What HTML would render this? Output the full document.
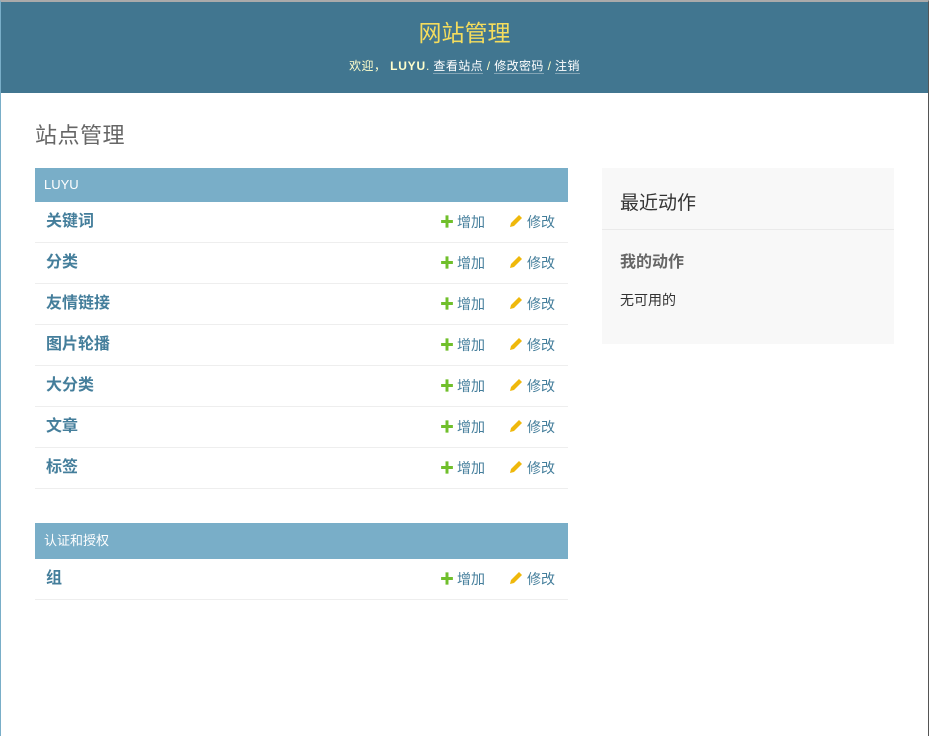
<!DOCTYPE html>
<html><head><meta charset="utf-8"><style>
*{box-sizing:border-box;margin:0;padding:0}
body{width:929px;height:736px;background:#fff;font-family:"Liberation Sans","Noto Sans CJK SC",sans-serif;font-size:14px;color:#333;position:relative;overflow:hidden;border-left:1px solid #79aec8;border-right:1px solid #555;border-top:2px solid #aaa}
#hd{height:91px;background:#417690;text-align:center;color:#ffc}
#hd h1{font-weight:normal;font-size:23px;color:#f5dd5d;padding-top:16px;line-height:30px}
#hd .u{font-size:12px;margin-top:9px;color:#ffc;letter-spacing:.4px}
#hd .u b{letter-spacing:.8px}
#hd .u a{color:#fff;text-decoration:none;border-bottom:1px solid rgba(255,255,255,.35)}
h2.t{position:absolute;left:34px;top:116px;font-size:22px;font-weight:normal;color:#666;letter-spacing:.5px}
.mod{position:absolute;left:34px;width:533px}
.cap{background:#79aec8;color:#fff;font-size:13px;height:34px;line-height:34px;padding-left:9px}
.row{height:41px;border-bottom:1px solid #eee;position:relative;line-height:40px}
.row .n{position:absolute;left:11px;font-size:16px;font-weight:bold;color:#447e9b}
.row .a{position:absolute;left:405px;color:#447e9b;font-size:14px}
.row .c{position:absolute;left:474px;color:#447e9b;font-size:14px}
.plus{display:inline-block;color:#70bf2b;font-weight:bold;font-size:14px;margin-right:3px}
.pen{display:inline-block;vertical-align:-1px;margin-right:4px}
#side{position:absolute;left:601px;top:166px;width:292px;height:176px;background:#f8f8f8}
#side h3{font-weight:normal;font-size:19px;color:#333;padding:20px 18px 0;height:62px;border-bottom:1px solid #eaeaea}
#side h4{font-size:16px;color:#666;padding:18px 18px 0}
#side p{padding:18px 18px 0;font-size:14px}
</style></head><body>
<div id="hd"><h1>网站管理</h1>
<div class="u">欢迎， <b>LUYU</b>. <a>查看站点</a> / <a>修改密码</a> / <a>注销</a></div></div>
<h2 class="t">站点管理</h2>
<div class="mod" style="top:166px"><div class="cap">LUYU</div>
<div class="row"><span class="n">关键词</span><span class="a"><span class="plus">✚</span>增加</span><span class="c"><svg class="pen" width="14" height="14" viewBox="0 0 14 14"><path d="M1 13l1-4 8-8 3 3-8 8z" fill="#efb80b"/></svg>修改</span></div>
<div class="row"><span class="n">分类</span><span class="a"><span class="plus">✚</span>增加</span><span class="c"><svg class="pen" width="14" height="14" viewBox="0 0 14 14"><path d="M1 13l1-4 8-8 3 3-8 8z" fill="#efb80b"/></svg>修改</span></div>
<div class="row"><span class="n">友情链接</span><span class="a"><span class="plus">✚</span>增加</span><span class="c"><svg class="pen" width="14" height="14" viewBox="0 0 14 14"><path d="M1 13l1-4 8-8 3 3-8 8z" fill="#efb80b"/></svg>修改</span></div>
<div class="row"><span class="n">图片轮播</span><span class="a"><span class="plus">✚</span>增加</span><span class="c"><svg class="pen" width="14" height="14" viewBox="0 0 14 14"><path d="M1 13l1-4 8-8 3 3-8 8z" fill="#efb80b"/></svg>修改</span></div>
<div class="row"><span class="n">大分类</span><span class="a"><span class="plus">✚</span>增加</span><span class="c"><svg class="pen" width="14" height="14" viewBox="0 0 14 14"><path d="M1 13l1-4 8-8 3 3-8 8z" fill="#efb80b"/></svg>修改</span></div>
<div class="row"><span class="n">文章</span><span class="a"><span class="plus">✚</span>增加</span><span class="c"><svg class="pen" width="14" height="14" viewBox="0 0 14 14"><path d="M1 13l1-4 8-8 3 3-8 8z" fill="#efb80b"/></svg>修改</span></div>
<div class="row"><span class="n">标签</span><span class="a"><span class="plus">✚</span>增加</span><span class="c"><svg class="pen" width="14" height="14" viewBox="0 0 14 14"><path d="M1 13l1-4 8-8 3 3-8 8z" fill="#efb80b"/></svg>修改</span></div>
</div>
<div class="mod" style="top:521px"><div class="cap" style="height:36px;line-height:36px">认证和授权</div>
<div class="row"><span class="n">组</span><span class="a"><span class="plus">✚</span>增加</span><span class="c"><svg class="pen" width="14" height="14" viewBox="0 0 14 14"><path d="M1 13l1-4 8-8 3 3-8 8z" fill="#efb80b"/></svg>修改</span></div>
</div>
<div id="side"><h3>最近动作</h3><h4>我的动作</h4><p>无可用的</p></div>
</body></html>
